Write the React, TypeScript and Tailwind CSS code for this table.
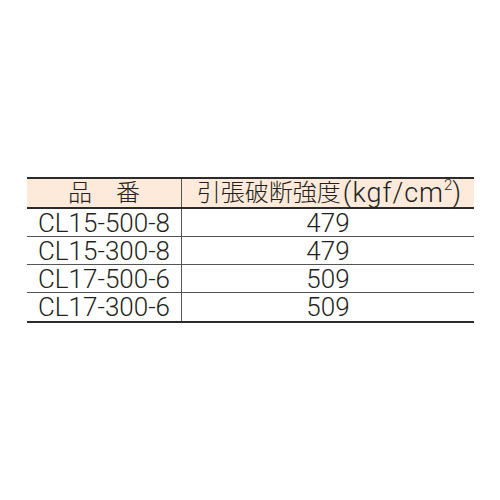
export default function App() {
  const rows = [
    ["CL15-500-8", "479"],
    ["CL15-300-8", "479"],
    ["CL17-500-6", "509"],
    ["CL17-300-6", "509"],
  ];

  return (
    <div
      className="w-[500px] h-[500px] bg-white pt-[177px] pl-[27px] text-[#231f20] font-light"
      style={{ fontFamily: 'Roboto, "Noto Sans CJK JP", sans-serif' }}
    >
      <div className="w-[447px] border-t-2 border-b-2 border-[#2b2b2b]">
        {/* header */}
        <div className="flex h-[30px] bg-[#fdeadb] border-b-2 border-[#2b2b2b]">
          <div className="w-[155px] border-r border-[#555] flex items-center justify-center text-[24px] leading-none">
            品　番
          </div>
          <div className="flex-1 flex items-center justify-center text-[24px] leading-none pl-[2px]">
            <span>引張破断強度</span>
            <span className="text-[27px] tracking-[1px] ml-[2px]">(kgf/cm</span>
            <span className="text-[15px] self-start -mt-[1px]">2</span>
            <span className="text-[27px]">)</span>
          </div>
        </div>
        {rows.map(([code, value], i) => (
          <div
            key={code}
            className={`flex h-[28px] ${i < rows.length - 1 ? "border-b border-[#555]" : ""}`}
          >
            <div className="w-[155px] border-r border-[#555] flex items-center justify-center text-[26px] leading-none">
              {code}
            </div>
            <div className="flex-1 flex items-center justify-center text-[26px] leading-none">
              {value}
            </div>
          </div>
        ))}
      </div>
    </div>
  );
}
